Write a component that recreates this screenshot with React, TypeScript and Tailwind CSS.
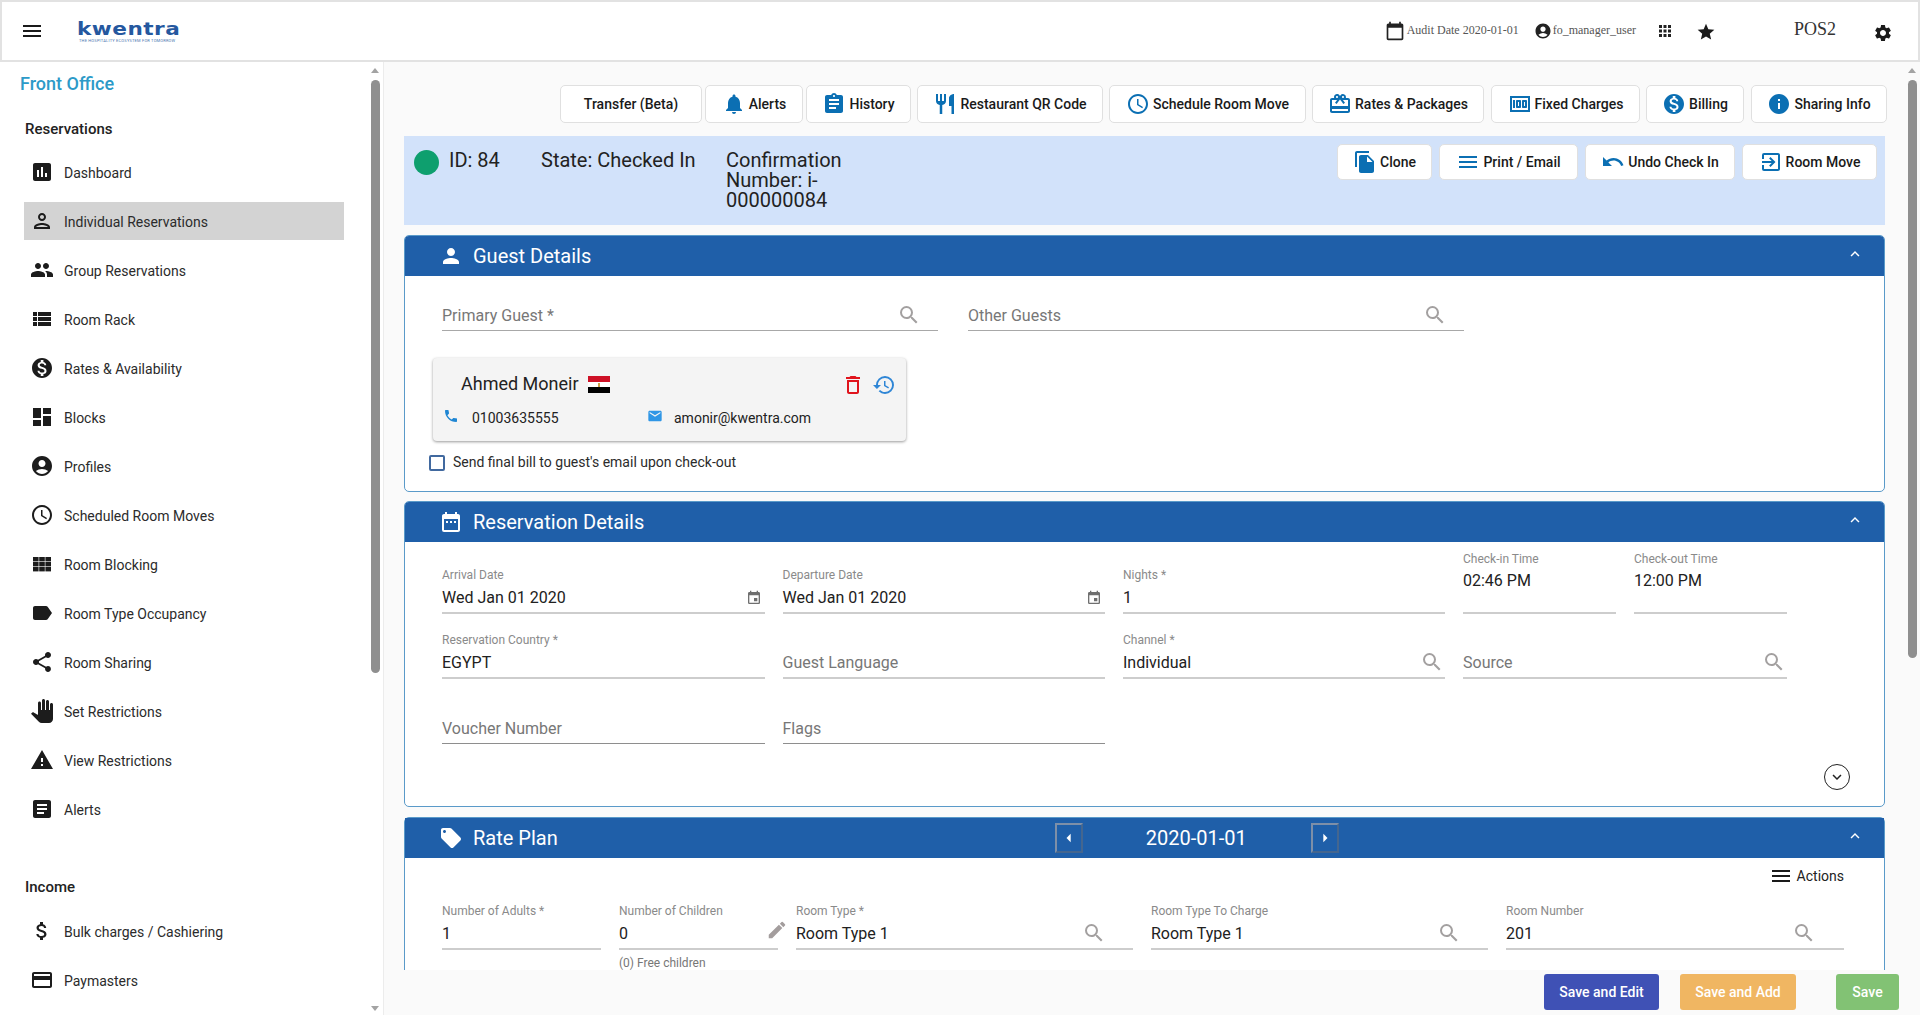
import React from "react";
import type { IconType } from "react-icons";
import {
  MdAccessTime, MdAccountCircle, MdApps, MdArrowLeft, MdArrowRight, MdArticle, MdAssignment, MdAttachMoney,
  MdCalendarToday, MdCardGiftcard, MdCreditCard, MdDashboard, MdDateRange, MdDeleteOutline, MdEdit, MdEmail, MdEvent,
  MdExitToApp, MdExpandLess, MdFileCopy, MdHistory, MdInfo, MdInsertChart, MdKeyboardArrowDown, MdLabel, MdLocalOffer,
  MdMenu, MdMonetizationOn, MdMoney, MdNotifications, MdOutlinePerson, MdPanTool, MdPeople, MdPerson, MdPhone,
  MdRestaurant, MdSearch, MdSettings, MdShare, MdStar, MdUndo, MdViewList, MdWarning,
} from "react-icons/md";

const GridIcon: IconType = ({ className }) => (
  <svg viewBox="0 0 24 24" fill="currentColor" className={className}>
    {[5, 10, 15].map((y) =>
      [3, 9.2, 15.4].map((x) => <rect key={x + "-" + y} x={x} y={y} width="5.6" height="4.4" />)
    )}
  </svg>
);

const nav: [IconType, string][] = [
  [MdInsertChart, "Dashboard"],
  [MdOutlinePerson, "Individual Reservations"],
  [MdPeople, "Group Reservations"],
  [MdViewList, "Room Rack"],
  [MdMonetizationOn, "Rates & Availability"],
  [MdDashboard, "Blocks"],
  [MdAccountCircle, "Profiles"],
  [MdAccessTime, "Scheduled Room Moves"],
  [GridIcon, "Room Blocking"],
  [MdLabel, "Room Type Occupancy"],
  [MdShare, "Room Sharing"],
  [MdPanTool, "Set Restrictions"],
  [MdWarning, "View Restrictions"],
  [MdArticle, "Alerts"],
];

function NavRow({ icon: Icon, label, active }: { icon: IconType; label: string; active?: boolean }) {
  return (
    <div className="h-[49px] pt-[4px]">
      <div className={"ml-[24px] flex h-[38px] w-[320px] items-center pl-[6px] " + (active ? "bg-[#d3d3d3]" : "")}>
        <Icon className="h-[24px] w-[24px] shrink-0 text-[#1c1c1c]" />
        <span className="ml-[10px] mt-[3px] text-[14px] text-[#2b2b2b]">{label}</span>
      </div>
    </div>
  );
}

function Scrollbar({ thumb }: { thumb: string }) {
  return (
    <div className="flex w-[16px] shrink-0 flex-col items-center">
      <div className="mt-[6px] h-0 w-0 border-x-[4px] border-b-[5px] border-x-transparent border-b-[#a3a3a3]" />
      <div className={"mt-[7px] w-[9px] rounded-full bg-[#8f8f8f] " + thumb} />
    </div>
  );
}

function TopButton({ icon: Icon, label, cls, iconCls }: { icon?: IconType; label: string; cls: string; iconCls?: string }) {
  return (
    <button className={"flex shrink-0 items-center justify-center gap-[3px] rounded-[5px] border border-[#e0e0e0] bg-white text-[14px] font-medium text-[#1a1a1a] " + cls}>
      {Icon ? <Icon className={"h-[24px] w-[24px] text-[#0b6fb3] " + (iconCls ?? "")} /> : null}
      <span>{label}</span>
    </button>
  );
}

function SectionHeader({ icon: Icon, title, children }: { icon: IconType; title: string; children?: React.ReactNode }) {
  return (
    <div className="flex h-[40px] items-center bg-[#1f5fa9] pl-[34px] text-white">
      <Icon className="h-[24px] w-[24px] shrink-0" />
      <span className="ml-[10px] text-[20px]">{title}</span>
      {children}
      <MdExpandLess className="ml-auto mr-[20px] -mt-[4px] h-[18px] w-[18px]" />
    </div>
  );
}

function Field({ label, value, placeholder, cls, tail, line = "border-b-2 border-[#cdcdcd]" }: {
  label?: string; value?: string; placeholder?: string; cls: string; tail?: React.ReactNode; line?: string;
}) {
  return (
    <div className={"flex shrink-0 flex-col justify-end " + line + " " + cls}>
      {label ? <div className="mb-[3px] h-[16px] text-[12px] leading-[16px] text-[#8a8a8a]">{label}</div> : null}
      <div className="flex items-center justify-between pb-[2px]">
        <span className={"h-[24px] text-[16px] leading-[24px] " + (value ? "text-[#212121]" : "text-[#777777]")}>{value ?? placeholder}</span>
        {tail}
      </div>
    </div>
  );
}

const Search = ({ cls }: { cls: string }) => <MdSearch className={"-mt-[3px] h-[24px] w-[24px] text-[#a3a0a0] " + cls} />;
const Cal = () => <MdEvent className="mr-[3px] h-[16px] w-[16px] text-[#6f6f6f]" />;

function TimeField({ label, value, cls }: { label: string; value: string; cls: string }) {
  return (
    <div className={"-mt-[17px] h-[63px] shrink-0 border-b-2 border-[#cdcdcd] " + cls}>
      <div className="mb-[2px] h-[16px] text-[12px] leading-[16px] text-[#8a8a8a]">{label}</div>
      <div className="h-[24px] text-[16px] leading-[24px] text-[#212121]">{value}</div>
    </div>
  );
}

export default function App() {
  return (
    <div className="flex h-[1015px] w-[1920px] flex-col overflow-hidden bg-white font-[Roboto,sans-serif]">
      <header className="flex h-[62px] shrink-0 items-center border-2 border-[#e2e2e2] bg-white pr-[25px]">
        <MdMenu className="ml-[18px] h-[24px] w-[24px] text-[#1a1a1a]" />
        <div className="ml-[33px] flex w-[108px] origin-left flex-col">
          <span className="origin-left scale-x-[1.2] font-['DejaVu_Sans',sans-serif] text-[18px] font-bold leading-[18px] tracking-[0.4px] text-[#25589f]">kwentra</span>
          <span className="ml-[2px] whitespace-nowrap text-[4px] leading-[5px] tracking-[0.2px] text-[#4a76b0]">THE HOSPITALITY ECOSYSTEM FOR TOMORROW</span>
        </div>
        <div className="flex-1" />
        <MdCalendarToday className="h-[20px] w-[20px] text-[#222222]" />
        <span className="ml-[2px] -mt-[2px] font-['Liberation_Serif',serif] text-[12px] text-[#555555]">Audit Date 2020-01-01</span>
        <MdAccountCircle className="ml-[15px] h-[18px] w-[18px] text-[#222222]" />
        <span className="ml-[1px] -mt-[2px] font-['Liberation_Serif',serif] text-[12px] text-[#555555]">fo_manager_user</span>
        <MdApps className="ml-[20px] h-[18px] w-[18px] text-[#222222]" />
        <MdStar className="ml-[22px] mt-[2px] h-[20px] w-[20px] text-[#1a1a1a]" />
        <span className="ml-[78px] -mt-[3px] font-['Liberation_Serif',serif] text-[18px] text-[#333333]">POS2</span>
        <MdSettings className="ml-[37px] mt-[3px] h-[20px] w-[20px] text-[#1a1a1a]" />
      </header>

      <div className="flex min-h-0 flex-1">
        <aside className="flex w-[384px] shrink-0 justify-between border-r border-[#ececec] bg-white">
          <div className="w-[367px] pt-[10px]">
            <div className="ml-[20px] h-[24px] text-[18px] font-medium leading-[24px] text-[#2c9ac8]">Front Office</div>
            <div className="ml-[25px] mt-[23px] h-[20px] text-[15px] font-medium leading-[20px] text-[#222222]">Reservations</div>
            <div className="mt-[10px]">
              {nav.map(([icon, label]) => (
                <NavRow key={label} icon={icon} label={label} active={label === "Individual Reservations"} />
              ))}
            </div>
            <div className="ml-[25px] mt-[42px] h-[20px] text-[15px] font-medium leading-[20px] text-[#222222]">Income</div>
            <div className="mt-[11px]">
              <NavRow icon={MdAttachMoney} label="Bulk charges / Cashiering" />
              <NavRow icon={MdCreditCard} label="Paymasters" />
            </div>
          </div>
          <div className="flex flex-col justify-between pb-[4px]">
            <Scrollbar thumb="h-[593px]" />
            <div className="ml-[4px] h-0 w-0 border-x-[4px] border-t-[5px] border-x-transparent border-t-[#a3a3a3]" />
          </div>
        </aside>

        <main className="flex min-w-0 flex-1 flex-col bg-[#fafafa]">
          <div className="flex min-h-0 flex-1 overflow-hidden">
            <div className="w-[1520px] shrink-0 pl-[20px] pt-[23px]">
              <div className="flex h-[38px] pl-[156px]">
                <TopButton label="Transfer (Beta)" cls="w-[142px]" />
                <TopButton icon={MdNotifications} label="Alerts" cls="ml-[3px] w-[98px]" />
                <TopButton icon={MdAssignment} label="History" cls="ml-[3px] w-[105px]" />
                <TopButton icon={MdRestaurant} label="Restaurant QR Code" cls="ml-[6px] w-[186px]" />
                <TopButton icon={MdAccessTime} label="Schedule Room Move" cls="ml-[6px] w-[197px]" />
                <TopButton icon={MdCardGiftcard} label="Rates & Packages" cls="ml-[6px] w-[172px]" />
                <TopButton icon={MdMoney} label="Fixed Charges" cls="ml-[7px] w-[149px]" />
                <TopButton icon={MdMonetizationOn} label="Billing" cls="ml-[6px] w-[98px]" />
                <TopButton icon={MdInfo} label="Sharing Info" cls="ml-[7px] w-[136px]" />
              </div>

              <div className="mt-[13px] flex h-[89px] w-[1481px] bg-[#d2e2fa] pl-[10px] text-[20px] leading-[20px] text-[#222222]">
                <div className="mt-[14px] h-[25px] w-[25px] shrink-0 rounded-full bg-[#0e9f6e]" />
                <div className="ml-[10px] w-[92px] pt-[14px]">ID: 84</div>
                <div className="w-[185px] pt-[14px]">State: Checked In</div>
                <div className="w-[135px] pt-[14px]">Confirmation Number: i-000000084</div>
                <div className="ml-auto mt-[8px] flex h-[36px] gap-[7px] pr-[8px]">
                  <TopButton icon={MdFileCopy} label="Clone" cls="h-[36px] w-[95px] leading-normal" />
                  <TopButton icon={MdMenu} label="Print / Email" cls="h-[36px] w-[139px] leading-normal" />
                  <TopButton icon={MdUndo} label="Undo Check In" cls="h-[36px] w-[150px] leading-normal" />
                  <TopButton icon={MdExitToApp} label="Room Move" cls="h-[36px] w-[135px] leading-normal" />
                </div>
              </div>

              <section className="mt-[10px] w-[1481px] overflow-hidden rounded-[5px] border border-[#5a9ac9] bg-white">
                <SectionHeader icon={MdPerson} title="Guest Details" />
                <div className="h-[215px] pl-[28px] pt-[28px]">
                  <div className="flex gap-[30px] pl-[9px]">
                    <Field placeholder="Primary Guest *" cls="w-[496px]" line="border-b border-[#a8a8a8]" tail={<Search cls="mr-[17px]" />} />
                    <Field placeholder="Other Guests" cls="w-[496px]" line="border-b border-[#a8a8a8]" tail={<Search cls="mr-[17px]" />} />
                  </div>
                  <div className="mt-[27px] h-[83px] w-[473px] rounded-[4px] bg-[#f4f4f4] pl-[10px] pr-[10px] shadow-[0_1px_3px_rgba(0,0,0,0.4)]">
                    <div className="flex h-[50px] items-center">
                      <span className="ml-[18px] text-[18px] text-[#222222]">Ahmed Moneir</span>
                      <div className="ml-[9px] mt-[3px] flex h-[17px] w-[22px] flex-col">
                        <div className="flex-1 bg-[#ce1126]" />
                        <div className="flex flex-1 items-center justify-center bg-white">
                          <div className="h-[4px] w-[2px] bg-[#c9a24a]" />
                        </div>
                        <div className="flex-1 bg-black" />
                      </div>
                      <MdDeleteOutline className="ml-auto mt-[4px] h-[24px] w-[24px] text-[#e0141c]" />
                      <MdHistory className="ml-[7px] mt-[4px] h-[24px] w-[24px] text-[#2f86d6]" />
                    </div>
                    <div className="flex items-center text-[14px] text-[#222222]">
                      <MdPhone className="-mt-[5px] h-[16px] w-[16px] text-[#1f86d3]" />
                      <span className="ml-[13px] w-[175px]">01003635555</span>
                      <MdEmail className="-mt-[5px] h-[16px] w-[16px] text-[#2f96e6]" />
                      <span className="ml-[11px]">amonir@kwentra.com</span>
                    </div>
                  </div>
                  <label className="-ml-[4px] mt-[11px] flex items-center">
                    <span className="h-[16px] w-[16px] rounded-[2px] border-2 border-[#41699f] bg-white" />
                    <span className="ml-[8px] text-[14px] text-[#2b2b2b]">Send final bill to guest's email upon check-out</span>
                  </label>
                </div>
              </section>

              <section className="mt-[9px] w-[1481px] overflow-hidden rounded-[5px] border border-[#5a9ac9] bg-white">
                <SectionHeader icon={MdDateRange} title="Reservation Details" />
                <div className="pl-[37px] pt-[26px]">
                  <div className="flex h-[46px] gap-[18px]">
                    <Field label="Arrival Date" value="Wed Jan 01 2020" cls="w-[322.5px]" tail={<Cal />} />
                    <Field label="Departure Date" value="Wed Jan 01 2020" cls="w-[322.5px]" tail={<Cal />} />
                    <Field label="Nights *" value="1" cls="w-[322px]" />
                    <TimeField label="Check-in Time" value="02:46 PM" cls="w-[153px]" />
                    <TimeField label="Check-out Time" value="12:00 PM" cls="w-[153px]" />
                  </div>
                  <div className="mt-[19px] flex h-[46px] gap-[18px]">
                    <Field label="Reservation Country *" value="EGYPT" cls="w-[322.5px]" />
                    <Field placeholder="Guest Language" cls="w-[322.5px]" />
                    <Field label="Channel *" value="Individual" cls="w-[322px]" tail={<Search cls="mr-[1px]" />} />
                    <Field placeholder="Source" cls="w-[324px]" tail={<Search cls="mr-[1px]" />} />
                  </div>
                  <div className="mt-[19px] flex h-[46px] gap-[18px]">
                    <Field placeholder="Voucher Number" cls="w-[322.5px]" line="border-b border-[#8e8e8e]" />
                    <Field placeholder="Flags" cls="w-[322.5px]" line="border-b border-[#8e8e8e]" />
                  </div>
                  <div className="flex justify-end pb-[16px] pr-[34px] pt-[20px]">
                    <div className="flex h-[26px] w-[26px] items-center justify-center rounded-full border border-[#222222]">
                      <MdKeyboardArrowDown className="h-[18px] w-[18px] text-[#222222]" />
                    </div>
                  </div>
                </div>
              </section>

              <section className="mt-[10px] w-[1481px] rounded-t-[5px] border border-[#5a9ac9] bg-white">
                <SectionHeader icon={MdLocalOffer} title="Rate Plan">
                  <div className="ml-[497px] flex items-center">
                    <div className="flex h-[30px] w-[28px] items-center justify-center border-2 border-b-[#44668f] border-l-[#7d8fa8] border-r-[#44668f] border-t-[#7d8fa8]">
                      <MdArrowLeft className="h-[20px] w-[20px]" />
                    </div>
                    <span className="ml-[63px] text-[20px]">2020-01-01</span>
                    <div className="ml-[64px] flex h-[30px] w-[28px] items-center justify-center border-2 border-b-[#44668f] border-l-[#7d8fa8] border-r-[#44668f] border-t-[#7d8fa8]">
                      <MdArrowRight className="h-[20px] w-[20px]" />
                    </div>
                  </div>
                </SectionHeader>
                <div className="pl-[37px] pt-[7px]">
                  <div className="flex h-[22px] items-center justify-end pr-[40px]">
                    <MdMenu className="h-[24px] w-[24px] text-[#1a1a1a]" />
                    <span className="ml-[4px] text-[14px] text-[#222222]">Actions</span>
                  </div>
                  <div className="mt-[17px] flex h-[46px] gap-[18px]">
                    <Field label="Number of Adults *" value="1" cls="w-[159px]" />
                    <Field label="Number of Children" value="0" cls="w-[159px]" tail={<MdEdit className="-mr-[10px] -mt-[8px] h-[22px] w-[22px] text-[#a39d9d]" />} />
                    <Field label="Room Type *" value="Room Type 1" cls="w-[337px]" tail={<Search cls="mr-[27px]" />} />
                    <Field label="Room Type To Charge" value="Room Type 1" cls="w-[337px]" tail={<Search cls="mr-[27px]" />} />
                    <Field label="Room Number" value="201" cls="w-[338px]" tail={<Search cls="mr-[28px]" />} />
                  </div>
                  <div className="ml-[177px] mt-[5px] text-[12px] leading-[16px] text-[#777777]">(0) Free children</div>
                </div>
              </section>
            </div>
            <Scrollbar thumb="h-[578px]" />
          </div>
          <div className="flex h-[45px] shrink-0 justify-end pr-[21px] pt-[4px]">
            <button className="h-[36px] w-[115px] rounded-[3px] bg-[#3f51b5] text-[14px] font-medium text-white">Save and Edit</button>
            <button className="ml-[21px] h-[36px] w-[116px] rounded-[3px] bg-[#f0b662] text-[14px] font-medium text-white">Save and Add</button>
            <button className="ml-[40px] h-[36px] w-[63px] rounded-[3px] bg-[#82c274] text-[14px] font-medium text-white">Save</button>
          </div>
        </main>
      </div>
    </div>
  );
}
